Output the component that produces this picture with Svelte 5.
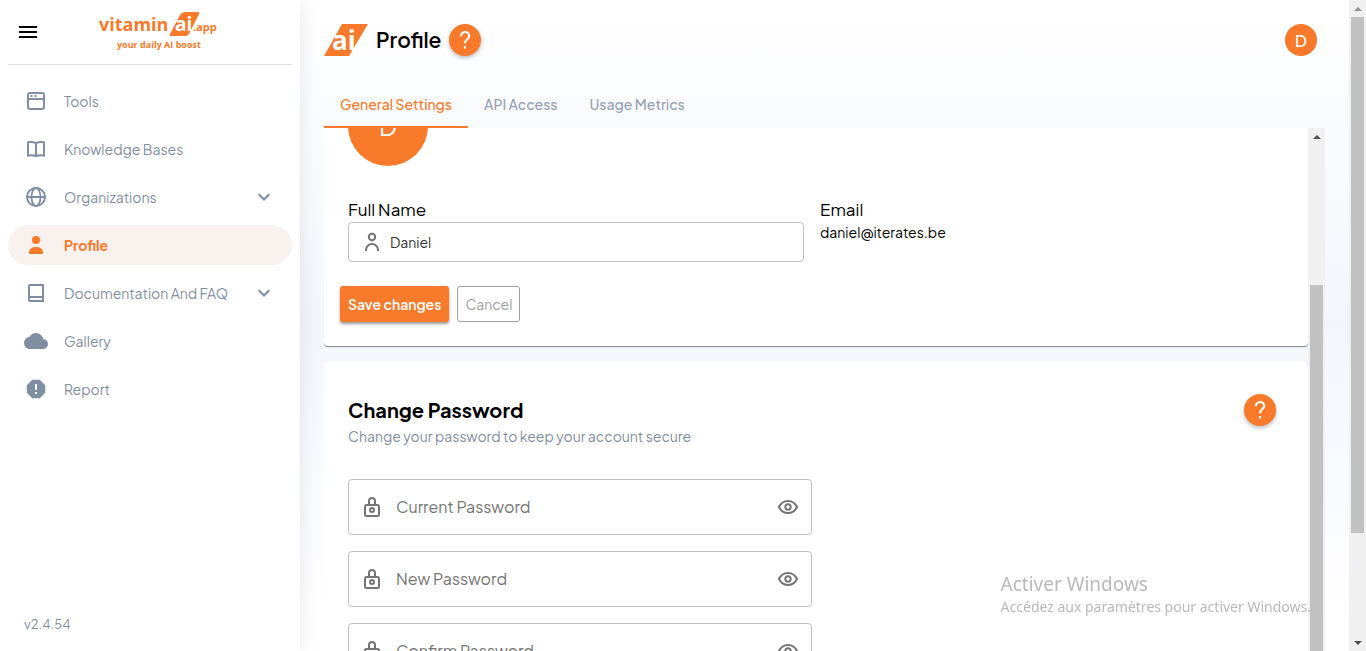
<script>
  const nav = [
    { label: 'Tools', icon: 'tools' },
    { label: 'Knowledge Bases', icon: 'book' },
    { label: 'Organizations', icon: 'globe', expandable: true },
    { label: 'Profile', icon: 'person', active: true },
    { label: 'Documentation And FAQ', icon: 'doc', expandable: true },
    { label: 'Gallery', icon: 'cloud' },
    { label: 'Report', icon: 'report' }
  ];
  const tabs = ['General Settings', 'API Access', 'Usage Metrics'];
  const passwords = [
    { id: 'current', label: 'Current Password' },
    { id: 'new', label: 'New Password' },
    { id: 'confirm', label: 'Confirm Password' }
  ];
  let selected = $state(0);
  let name = $state('Daniel');
  let visible = $state({});
</script>

{#snippet icon(kind)}
  <svg class="icon" viewBox="0 0 24 24" fill="none" stroke="currentColor" stroke-width="2" aria-hidden="true">
    {#if kind === 'tools'}
      <rect x="4" y="4" width="16" height="16" rx="2" />
      <path d="M4 10h16" />
      <path d="M6.500 7h2M10.500 7h2" />
    {:else if kind === 'book'}
      <path d="M4 5.200Q8 4.400 12 6Q16 4.400 20 5.200V18.600Q16 17.600 12 19Q8 17.600 4 18.600ZM12 6V19" stroke-width="2" />
    {:else if kind === 'globe'}
      <circle cx="12" cy="12" r="9" />
      <ellipse cx="12" cy="12" rx="4.500" ry="9" stroke-width="1.800" />
      <path d="M3 12h18" />
    {:else if kind === 'person'}
      <circle cx="12" cy="7" r="4" fill="currentColor" stroke="none" />
      <path d="M5 21v-1.500c0-3.500 3-5.500 7-5.500s7 2 7 5.500V21Z" fill="currentColor" stroke="none" />
    {:else if kind === 'doc'}
      <path d="M5 18.500V5a1 1 0 0 1 1-1h13v16H6a1 1 0 0 1-1-1.500ZM5 16h14" />
    {:else if kind === 'cloud'}
      <path d="M19.350 10.040A7.490 7.490 0 0 0 12 4C9.110 4 6.600 5.640 5.350 8.040A5.994 5.994 0 0 0 0 14c0 3.310 2.690 6 6 6h13c2.760 0 5-2.240 5-5 0-2.640-2.050-4.780-4.650-4.960z" fill="currentColor" stroke="none" />
    {:else if kind === 'report'}
      <path fill-rule="evenodd" d="M8.200 2.800h7.600L21.200 8.200v7.600l-5.400 5.400H8.200L2.800 15.800V8.200ZM11 7v6h2V7Zm0 8v2h2v-2Z" fill="currentColor" stroke="none" />
    {:else if kind === 'user'}
      <circle cx="12" cy="7" r="3.200" />
      <path d="M6 21v-1a6 6 0 0 1 12 0v1" />
    {:else if kind === 'lock'}
      <rect x="5" y="10" width="14" height="11" rx="1.500" />
      <path d="M9 10V6a3 3 0 0 1 6 0v4" />
      <circle cx="12" cy="15" r="2" />
    {:else if kind === 'eye'}
      <path d="M3 12c1.800-3.700 5.100-6 9-6s7.200 2.300 9 6c-1.800 3.700-5.100 6-9 6s-7.200-2.300-9-6Z" />
      <circle cx="12" cy="12" r="2.700" />
    {:else if kind === 'chevron'}
      <path d="m6.700 9.200 5.300 5.300 5.300-5.300" stroke-width="2.200" />
    {:else if kind === 'menu'}
      <path d="M3 7h18M3 12h18M3 17h18" />
    {:else if kind === 'help'}
      <path d="M7.800 8.300C7.800 5.800 9.600 4 12 4s4.200 1.700 4.200 4.100c0 3.100-4.200 3.300-4.200 7.100M12 18v2.400" stroke-width="2.200" />
    {/if}
  </svg>
{/snippet}

<div class="app">
  <aside>
    <div class="brand">
      <button class="plain" aria-label="Toggle menu">{@render icon('menu')}</button>
      <svg class="logo" viewBox="0 0 120 42" role="img" aria-label="vitamin ai app">
        <text x="1" y="20" font-size="18">vitamin</text>
        <path d="M87 1h13q2 0 1 2L91 23q-1 2-4 2H73q-2 0-1-2L82 4q2-3 5-3Z" />
        <text class="white" x="77" y="20" font-size="19">ai</text>
        <text x="95" y="20" font-size="11">.app</text>
        <text x="19" y="37" font-size="9">your daily AI boost</text>
      </svg>
    </div>
    <nav>
      {#each nav as item}
        <a href="#{item.icon}" class:active={item.active}>
          {@render icon(item.icon)}
          <span>{item.label}</span>
          {#if item.expandable}{@render icon('chevron')}{/if}
        </a>
      {/each}
    </nav>
    <footer>v2.4.54</footer>
  </aside>

  <main>
    <header>
      <svg class="mark" viewBox="0 0 44 32" role="img" aria-label="ai">
        <path d="M18 0h26L25 32H0Z" />
        <text class="white" x="8" y="26" font-size="26">ai</text>
      </svg>
      <h1>Profile</h1>
      <button class="help" aria-label="Help">{@render icon('help')}</button>
      <button class="account" aria-label="Account">D</button>
    </header>
    <div class="tabs" role="tablist">
      {#each tabs as tab, i}
        <button role="tab" aria-selected={selected === i} class:selected={selected === i} onclick={() => (selected = i)}>{tab}</button>
      {/each}
    </div>
    <div class="scroller">
      <div class="stack">
        <section class="card profile">
          <div class="avatar">D</div>
          <div class="fields">
            <div>
              <label for="name">Full Name</label>
              <div class="box small">
                {@render icon('user')}
                <input id="name" bind:value={name} />
              </div>
            </div>
            <div>
              <div class="caption">Email</div>
              <div class="email">daniel@iterates.be</div>
            </div>
          </div>
          <div class="actions">
            <button class="save">Save changes</button>
            <button class="cancel">Cancel</button>
          </div>
        </section>
        <section class="card password">
          <div class="heading">
            <div>
              <h2>Change Password</h2>
              <p>Change your password to keep your account secure</p>
            </div>
            <button class="help" aria-label="Password help">{@render icon('help')}</button>
          </div>
          {#each passwords as p}
            <div class="box">
              {@render icon('lock')}
              <input id={p.id} type={visible[p.id] ? 'text' : 'password'} placeholder={p.label} aria-label={p.label} />
              <button class="plain" aria-label="Show password" onclick={() => (visible[p.id] = !visible[p.id])}>{@render icon('eye')}</button>
            </div>
          {/each}
        </section>
      </div>
      <div class="bar inner"><i class="up"></i><div class="thumb"></div></div>
    </div>
  </main>
  <div class="bar outer"><i class="up"></i><div class="thumb"></div><i class="down"></i></div>
  <div class="notice">
    <strong>Activer Windows</strong>
    <span>Accédez aux paramètres pour activer Windows.</span>
  </div>
</div>

<style>
  :global(body) { margin: 0; }
  .app {
    --orange: #f87a2a;
    --slate: #7f8ea0;
    display: flex;
    height: 100vh;
    overflow: hidden;
    font-family: 'Plus Jakarta Sans', Inter, sans-serif;
    font-size: 14px;
    color: #000;
  }
  .app :global(*) { box-sizing: border-box; }
  button, input { font: inherit; }
  button { cursor: pointer; border: 0; padding: 0; }
  .icon { display: block; width: 24px; height: 24px; flex: none; }
  .plain { background: none; color: inherit; }

  aside {
    width: 300px;
    flex: none;
    display: flex;
    flex-direction: column;
    padding: 0 8px;
    background: #fff;
    box-shadow: 0 0 20px #00000018;
    z-index: 1;
  }
  .brand {
    display: flex;
    align-items: center;
    height: 65px;
    padding-left: 8px;
    border-bottom: 1px solid #e0e0e0;
  }
  .logo { width: 120px; height: 42px; margin-left: 58px; }
  .logo, .mark { fill: var(--orange); font-family: 'Open Sans', sans-serif; font-weight: 700; overflow: visible; }
  .white { fill: #fff; }
  nav { display: flex; flex-direction: column; gap: 8px; padding-top: 16px; flex: 1; }
  nav a {
    display: flex;
    align-items: center;
    gap: 16px;
    height: 40px;
    padding: 0 16px;
    border-radius: 20px;
    color: var(--slate);
    text-decoration: none;
  }
  nav span { flex: 1; }
  nav .active { background: #f9f1ee; color: var(--orange); font-weight: 700; }
  footer { padding: 0 16px 18px; font-size: 13px; line-height: 17px; color: var(--slate); }

  main {
    flex: 1;
    min-width: 0;
    display: flex;
    flex-direction: column;
    padding: 0 24px;
    background: linear-gradient(#fff, #fafbfe 20%, #f2f6fb 50%, #f8f9fe 68%, #fff 95%);
  }
  header { display: flex; align-items: center; height: 80px; padding-right: 8px; flex: none; }
  .mark { width: 44px; height: 32px; }
  h1, h2 { margin: 0; font-size: 20px; line-height: 32px; font-weight: 700; }
  h1 { margin: 0 8px; font-size: 21px; font-weight: 600; }
  .help, .account {
    display: grid;
    place-items: center;
    width: 32px;
    height: 32px;
    border-radius: 50%;
    background: var(--orange);
    color: #fff;
    flex: none;
  }
  .help { box-shadow: 0 2px 4px #0004; }
  .account { margin-left: auto; font-size: 16px; font-weight: 500; }
  .tabs { display: flex; height: 48px; flex: none; }
  .tabs button {
    padding: 2px 16px 0;
    background: none;
    color: #94a0b1;
    font-weight: 500;
    border-bottom: 2px solid transparent;
  }
  .tabs .selected { color: var(--orange); border-color: var(--orange); }

  .scroller { flex: 1; min-height: 0; display: flex; overflow: hidden; }
  .stack { flex: 1; min-width: 0; display: flex; flex-direction: column; gap: 16px; margin-top: -66px; }
  .card { background: #fff; padding: 24px; border-radius: 4px; box-shadow: 0 1px 1px #0007; flex: none; }
  .avatar {
    display: grid;
    place-items: center;
    width: 80px;
    height: 80px;
    border-radius: 50%;
    background: var(--orange);
    color: #fff;
    font-size: 24px;
  }
  .fields { display: grid; grid-template-columns: 1fr 1fr; gap: 16px; margin: 32px 8px 24px 0; }
  label, .caption { display: block; padding-bottom: 2px; font-size: 17px; line-height: 22px; }
  .email { line-height: 20px; }
  .box {
    display: flex;
    align-items: center;
    width: calc(50% - 4px);
    height: 56px;
    padding: 0 11px;
    border: 1px solid #c0c0c0;
    border-radius: 4px;
    color: #757575;
  }
  .box + .box { margin-top: 16px; }
  .small { width: 100%; height: 40px; }
  input {
    flex: 1;
    min-width: 0;
    border: 0;
    outline: 0;
    padding: 0 0 2px 12px;
    background: none;
    font-size: 16px;
    color: #333;
  }
  .small input { font-size: 14px; padding: 0 0 0 6px; }
  input::placeholder { color: #757575; opacity: 1; }
  .actions { display: flex; gap: 8px; margin-left: -8px; }
  .actions button { height: 36px; padding: 0 8px; border-radius: 3px; }
  .save { background: var(--orange); color: #fff; font-weight: 600; box-shadow: 0 2px 3px #0006; }
  .actions .cancel { background: #fff; border: 1px solid #9e9e9e; padding: 0 7px; color: #a0a0a0; }
  .password { padding-top: 32px; }
  .heading { display: flex; justify-content: space-between; padding-right: 8px; margin-bottom: 32px; }
  .heading p { margin: 0; line-height: 21px; color: var(--slate); }

  .bar { width: 17px; flex: none; background: #f0f0f0; display: flex; flex-direction: column; align-items: center; }
  .bar i { height: 17px; display: grid; place-items: center; flex: none; }
  .bar i::before { content: ''; border: 4px solid transparent; }
  .up::before { border-top: 0 !important; border-bottom-color: #505050 !important; }
  .down::before { border-bottom: 0 !important; border-top-color: #505050 !important; }
  .outer .up { opacity: 0.600; }
  .outer .down { margin-top: auto; }
  .thumb { width: 13px; background: #c1c1c1; }
  .outer .thumb { height: calc(100% - 135px); }
  .inner .thumb { flex: 1; margin-top: 140px; }
  .notice {
    position: fixed;
    right: 55px;
    bottom: 33px;
    display: flex;
    flex-direction: column;
    font-family: 'Noto Sans', sans-serif;
    color: #b9b9b9;
    pointer-events: none;
    white-space: nowrap;
  }
  .notice strong { font-size: 19px; font-weight: 400; line-height: 24px; }
  .notice span { line-height: 22px; }
</style>
